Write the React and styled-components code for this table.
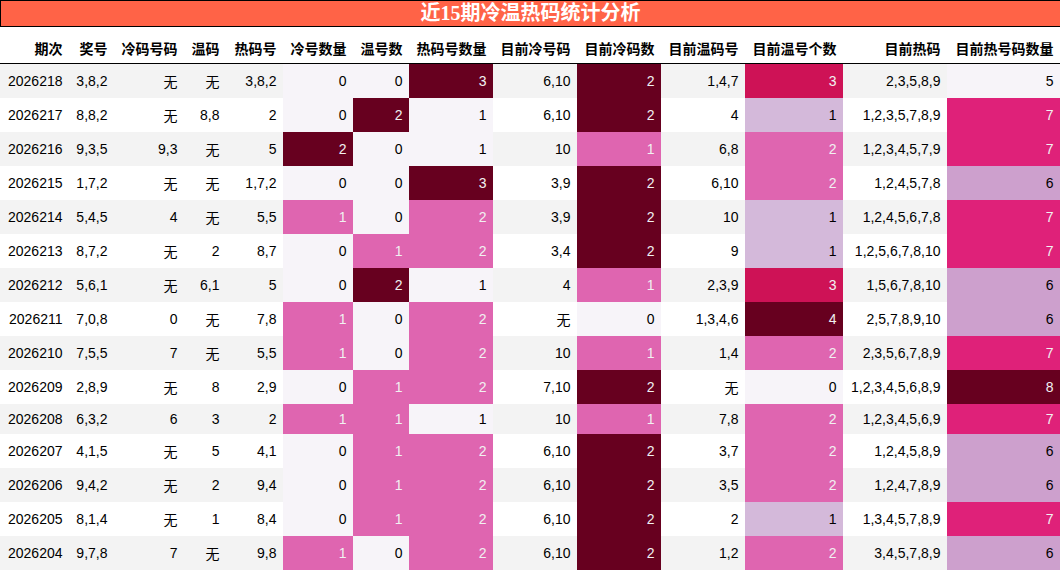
import React from "react";
import styled, { createGlobalStyle } from "styled-components";

const GlobalStyle = createGlobalStyle`
  html, body {
    margin: 0;
    padding: 0;
    background: #ffffff;
    overflow: hidden;
  }
  body {
    font-family: "Liberation Sans", "Noto Sans CJK SC", sans-serif;
  }
`;

const Page = styled.div`
  width: 1060px;
`;

const Title = styled.div`
  height: 25px;
  line-height: 25px;
  border: 1px solid #000000;
  border-right: none;
  background: #ff6347;
  color: #ffffff;
  text-align: center;
  font-family: "Liberation Serif", "Noto Sans CJK SC", serif;
  font-size: 20px;
  font-weight: bold;
  white-space: nowrap;
`;

const Table = styled.table`
  width: 1060px;
  table-layout: fixed;
  border-collapse: collapse;
  border-spacing: 0;
  font-size: 14px;
  color: #000000;
`;

const Col = styled.col`
  width: ${(p) => p.$w}px;
`;

const HeadCell = styled.th`
  padding: 11px 6.5px 5px 6px;
  line-height: 20px;
  font-family: "Noto Sans CJK SC", "Liberation Sans", sans-serif;
  font-weight: bold;
  text-align: right;
  white-space: nowrap;
  background: #ffffff;
  border-bottom: 1px solid #000000;
`;

const Row = styled.tr`
  background: ${(p) => (p.$shade ? "#f3f3f3" : "#ffffff")};
`;

const Cell = styled.td`
  padding: 7px 6.5px 7px 6px;
  line-height: 16px;
  text-align: right;
  white-space: nowrap;
  vertical-align: middle;
  background: ${(p) => p.$bg || "transparent"};
  color: ${(p) => p.$fg || "#000000"};
`;

const NoneMark = styled.span`
  font-family: "Noto Sans CJK SC", sans-serif;
  line-height: 20px;
`;

const COLUMNS = [
  { label: "期次", w: 69 },
  { label: "奖号", w: 45 },
  { label: "冷码号码", w: 70 },
  { label: "温码", w: 42 },
  { label: "热码号", w: 57 },
  { label: "冷号数量", w: 70, grad: true },
  { label: "温号数", w: 56, grad: true },
  { label: "热码号数量", w: 84, grad: true },
  { label: "目前冷号码", w: 84 },
  { label: "目前冷码数", w: 84, grad: true },
  { label: "目前温码号", w: 84 },
  { label: "目前温号个数", w: 98, grad: true },
  { label: "目前热码", w: 104 },
  { label: "目前热号码数量", w: 113, grad: true },
];

const ROWS = [
  ["2026218", "3,8,2", "无", "无", "3,8,2", 0, 0, 3, "6,10", 2, "1,4,7", 3, "2,3,5,8,9", 5],
  ["2026217", "8,8,2", "无", "8,8", "2", 0, 2, 1, "6,10", 2, "4", 1, "1,2,3,5,7,8,9", 7],
  ["2026216", "9,3,5", "9,3", "无", "5", 2, 0, 1, "10", 1, "6,8", 2, "1,2,3,4,5,7,9", 7],
  ["2026215", "1,7,2", "无", "无", "1,7,2", 0, 0, 3, "3,9", 2, "6,10", 2, "1,2,4,5,7,8", 6],
  ["2026214", "5,4,5", "4", "无", "5,5", 1, 0, 2, "3,9", 2, "10", 1, "1,2,4,5,6,7,8", 7],
  ["2026213", "8,7,2", "无", "2", "8,7", 0, 1, 2, "3,4", 2, "9", 1, "1,2,5,6,7,8,10", 7],
  ["2026212", "5,6,1", "无", "6,1", "5", 0, 2, 1, "4", 1, "2,3,9", 3, "1,5,6,7,8,10", 6],
  ["2026211", "7,0,8", "0", "无", "7,8", 1, 0, 2, "无", 0, "1,3,4,6", 4, "2,5,7,8,9,10", 6],
  ["2026210", "7,5,5", "7", "无", "5,5", 1, 0, 2, "10", 1, "1,4", 2, "2,3,5,6,7,8,9", 7],
  ["2026209", "2,8,9", "无", "8", "2,9", 0, 1, 2, "7,10", 2, "无", 0, "1,2,3,4,5,6,8,9", 8],
  ["2026208", "6,3,2", "6", "3", "2", 1, 1, 1, "10", 1, "7,8", 2, "1,2,3,4,5,6,9", 7],
  ["2026207", "4,1,5", "无", "5", "4,1", 0, 1, 2, "6,10", 2, "3,7", 2, "1,2,4,5,8,9", 6],
  ["2026206", "9,4,2", "无", "2", "9,4", 0, 1, 2, "6,10", 2, "3,5", 2, "1,2,4,7,8,9", 6],
  ["2026205", "8,1,4", "无", "1", "8,4", 0, 1, 2, "6,10", 2, "2", 1, "1,3,4,5,7,8,9", 7],
  ["2026204", "9,7,8", "7", "无", "9,8", 1, 0, 2, "6,10", 2, "1,2", 2, "3,4,5,7,8,9", 6],
];

const PURD = [
  "#f7f4f9", "#e7e1ef", "#d4b9da", "#c994c7", "#df65b0",
  "#e7298a", "#ce1256", "#980043", "#67001f",
];

const hexToRgb = (h) => [1, 3, 5].map((i) => parseInt(h.slice(i, i + 2), 16));

function purd(t) {
  const x = Math.min(Math.max(t, 0), 1) * 8;
  const i = Math.min(Math.floor(x), 7);
  const f = x - i;
  const a = hexToRgb(PURD[i]);
  const b = hexToRgb(PURD[i + 1]);
  return a.map((v, k) => Math.round(v + (b[k] - v) * f));
}

function luminance([r, g, b]) {
  const lin = (c) => {
    const s = c / 255;
    return s <= 0.03928 ? s / 12.92 : Math.pow((s + 0.055) / 1.055, 2.4);
  };
  return 0.2126 * lin(r) + 0.7152 * lin(g) + 0.0722 * lin(b);
}

const RANGES = COLUMNS.map((c, ci) => {
  if (!c.grad) return null;
  const vals = ROWS.map((r) => r[ci]);
  return [Math.min(...vals), Math.max(...vals)];
});

function gradientFor(ci, v) {
  const rng = RANGES[ci];
  if (!rng) return {};
  const [lo, hi] = rng;
  const rgb = purd(hi === lo ? 0 : (v - lo) / (hi - lo));
  return {
    bg: `rgb(${rgb[0]}, ${rgb[1]}, ${rgb[2]})`,
    fg: luminance(rgb) < 0.408 ? "#f1f1f1" : "#000000",
  };
}

export default function App() {
  return (
    <Page>
      <GlobalStyle />
      <Title>近15期冷温热码统计分析</Title>
      <Table>
        <colgroup>
          {COLUMNS.map((c) => (
            <Col key={c.label} $w={c.w} />
          ))}
        </colgroup>
        <thead>
          <tr>
            {COLUMNS.map((c) => (
              <HeadCell key={c.label}>{c.label}</HeadCell>
            ))}
          </tr>
        </thead>
        <tbody>
          {ROWS.map((row, ri) => (
            <Row key={row[0]} $shade={ri % 2 === 0}>
              {row.map((v, ci) => {
                const g = gradientFor(ci, v);
                return (
                  <Cell key={ci} $bg={g.bg} $fg={g.fg}>
                    {v === "无" ? <NoneMark>无</NoneMark> : v}
                  </Cell>
                );
              })}
            </Row>
          ))}
        </tbody>
      </Table>
    </Page>
  );
}
